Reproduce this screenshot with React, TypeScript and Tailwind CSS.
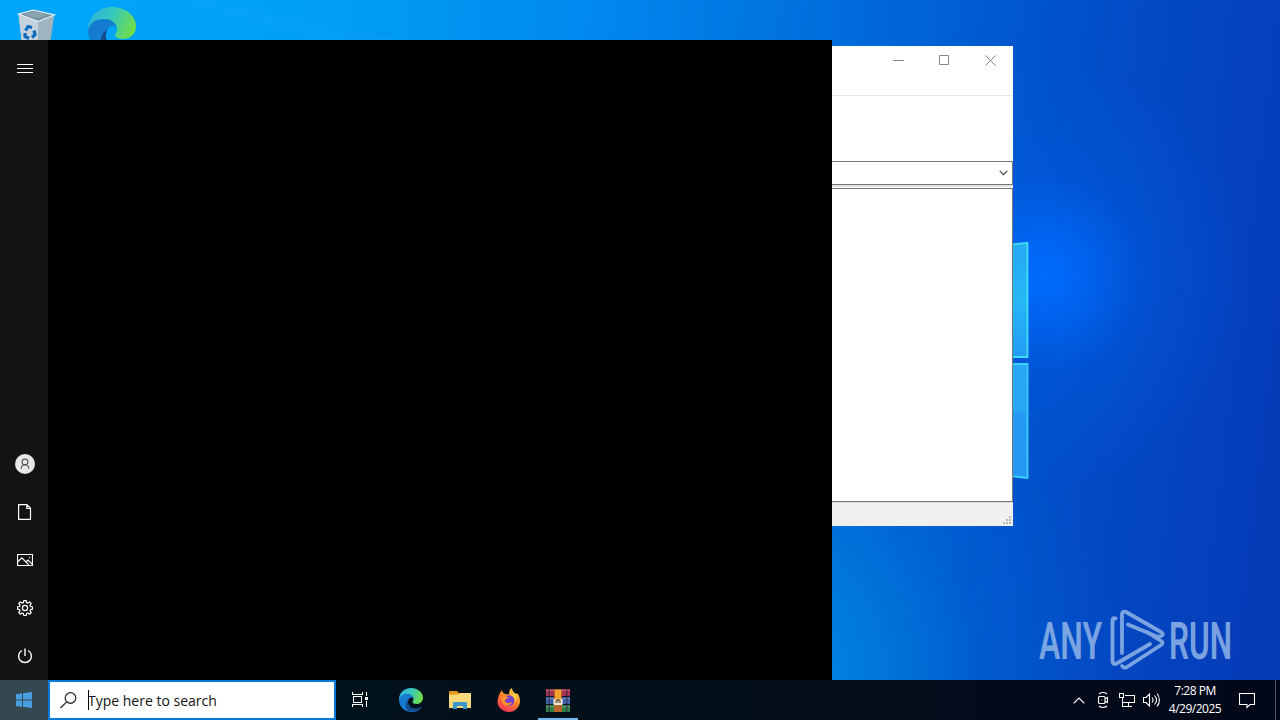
import type { ReactNode } from "react";

const railItems: { name: string; icon: ReactNode }[] = [
  { name: "Account", icon: <AccountIcon /> },
  { name: "Documents", icon: <DocumentIcon /> },
  { name: "Pictures", icon: <PicturesIcon /> },
  { name: "Settings", icon: <SettingsIcon /> },
  { name: "Power", icon: <PowerIcon /> },
];

function HamburgerIcon() {
  return (
    <svg width="16" height="9" viewBox="0 0 16 9" stroke="#fff" shapeRendering="crispEdges">
      <path d="M0 .5h16M0 4.5h16M0 8.5h16" />
    </svg>
  );
}

function AccountIcon() {
  return (
    <svg width="20" height="20" viewBox="0 0 20 20" fill="none">
      <circle cx="10" cy="10" r="10" fill="#e6e6e6" />
      <circle cx="10" cy="8" r="2.9" stroke="#555" strokeWidth="1.1" />
      <path d="M6.3 14.8c0-2.4 1.6-4 3.7-4s3.7 1.6 3.7 4" stroke="#555" strokeWidth="1.1" />
    </svg>
  );
}

function DocumentIcon() {
  return (
    <svg width="14" height="16" viewBox="0 0 14 16" fill="none" stroke="#fff" strokeWidth="1.2">
      <path d="M.6.6h8.200l3.700 3.700v11.100H.6zM8.800.6v3.900h3.700" />
    </svg>
  );
}

function PicturesIcon() {
  return (
    <svg width="16" height="12" viewBox="0 0 16 12" fill="none" stroke="#fff" strokeWidth="1.2">
      <path d="M.5.5h15v11H.5zM.8 7.8 4.8 3.8l7 7M9 8l2-2 4.4 4.4" />
      <circle cx="12.5" cy="3.5" r=".7" fill="#fff" stroke="none" />
    </svg>
  );
}

function SettingsIcon() {
  return (
    <svg width="16" height="16" viewBox="0 0 16 16" fill="none" stroke="#fff" strokeWidth="1.25" strokeLinejoin="round">
      <path d="M6.8.6h2.4l.4 2 1.3.5 1.7-1.2 1.6 1.6L13 5.2l.5 1.3 2 .3v2.4l-2 .4-.5 1.3 1.2 1.7-1.6 1.6-1.7-1.2-1.3.5-.4 2H6.8l-.4-2-1.3-.5-1.7 1.2-1.6-1.6L3 10.900l-.5-1.3-2-.4V6.800l2-.3L3 5.200 1.800 3.500l1.600-1.600 1.700 1.200 1.300-.5z" />
      <circle cx="8" cy="8" r="2.600" />
    </svg>
  );
}

function PowerIcon() {
  return (
    <svg width="16" height="16" viewBox="0 0 16 16" fill="none" stroke="#fff" strokeWidth="1.4">
      <path d="M5 2.500a6.400 6.400 0 1 0 6 0M8 .5v7.500" />
    </svg>
  );
}

function RecycleBin() {
  return (
    <svg width="40" height="48" viewBox="0 0 40 48">
      <path d="M1.500 6 6 44h24L37 8l-16 5z" fill="#b9c8d2" />
      <path d="M1.500 6 21 13v31H6z" fill="#c3d2dc" />
      <path d="M21 13 37 7.500 32 44H21z" fill="#9eb4c1" />
      <path d="m1.500 6 15-4 21 5L21 13.500z" fill="#7895a6" stroke="#eef6fa" strokeWidth="1.100" />
      <path d="m8 6.500 9-3 12 3-8 4z" fill="#8ca3b0" />
      <g fill="none" stroke="#0b6cbd" strokeWidth="3.200">
        <path d="m8.500 22.500 2.500-4 4 1M17 22.500l1 4-3 3M12 30.500l-4-2v-3.500" />
      </g>
    </svg>
  );
}

function EdgeLogo({ size, id }: { size: number; id: string }) {
  return (
    <svg width={size} height={size} viewBox="0 0 48 48">
      <defs>
        <linearGradient id={`${id}-top`} x1="0" y1=".4" x2="1" y2=".7">
          <stop offset="0" stopColor="#2bb4df" />
          <stop offset=".45" stopColor="#38c9b8" />
          <stop offset="1" stopColor="#78df3c" />
        </linearGradient>
        <linearGradient id={`${id}-low`} x1="0" y1="0" x2=".8" y2="1">
          <stop offset="0" stopColor="#1679ce" />
          <stop offset="1" stopColor="#1484d6" />
        </linearGradient>
      </defs>
      <path d="M0 23C0 10 10 0 24 0s24 9 24 19c0 8-6 13-13 13-5 0-8-2-8-4 0-1 2-2 2-6 0-5-5-9-12-9-8 0-14 4-17 10z" fill={`url(#${id}-top)`} />
      <path d="M0 23c2-8 9-11 16-11 8 0 13 5 13 10 0-4-9-5-11 3-2 9 6 18 16 17 5 0 8-2 10-3-4 6-11 9-18 9C11 48 0 38 0 23z" fill={`url(#${id}-low)`} />
      <path d="M17 45c-6-7-6-18 3-23-3 5-3 10 1 14 6 7 15 6 22 2 2-1 3 0 2 1-6 8-17 11-28 6z" fill="#124c91" />
    </svg>
  );
}

function StartMenu() {
  return (
    <div className="absolute left-0 top-10 flex h-[640px] w-[832px] bg-black">
      <nav className="flex w-12 flex-col justify-between bg-[#131313]">
        <button className="flex h-14 w-12 items-center justify-center pl-0.5">
          <HamburgerIcon />
        </button>
        <div className="flex flex-col">
          {railItems.map((item) => (
            <button key={item.name} aria-label={item.name} className="flex h-12 w-12 items-center justify-center pl-0.5">
              {item.icon}
            </button>
          ))}
        </div>
      </nav>
    </div>
  );
}

function AppWindow() {
  return (
    <div className="absolute left-[430px] top-[46px] flex h-[480px] w-[583px] flex-col bg-white">
      <div className="flex h-[29px] justify-end text-[#858585]">
        <div className="flex w-[45px] items-center justify-center">
          <svg width="11" height="11" viewBox="0 0 11 11" stroke="currentColor">
            <path d="M0 5.500h11" />
          </svg>
        </div>
        <div className="flex w-[46px] items-center justify-center">
          <svg width="11" height="11" viewBox="0 0 11 11" fill="none" stroke="currentColor">
            <path d="M.5.5h9v9h-9z" />
          </svg>
        </div>
        <div className="flex w-[46px] items-center justify-center">
          <svg width="11" height="11" viewBox="0 0 11 11" stroke="currentColor">
            <path d="m.5.5 10 10M10.500.5l-10 10" />
          </svg>
        </div>
      </div>
      <div className="h-[21px] border-b border-[#e8e8e8]" />
      <div className="h-[65px]" />
      <div className="flex h-6 items-center justify-end border border-[#777] pr-1">
        <svg width="9" height="6" viewBox="0 0 9 6" fill="none" stroke="#444" strokeWidth="1.200">
          <path d="m.7.8 3.800 3.800L8.300.8" />
        </svg>
      </div>
      <div className="h-[3px] border-b border-white bg-[#e4e4e4]" />
      <div className="h-[314px] border border-[#777]" />
      <div className="flex flex-1 items-end justify-end border-t border-[#d7d7d7] bg-[#f0f0f0] p-0.5">
        <svg width="8" height="8" viewBox="0 0 8 8" fill="#b5b5b5">
          <path d="M6 0h2v2H6zM3 3h2v2H3zM6 3h2v2H6zM0 6h2v2H0zM3 6h2v2H3zM6 6h2v2H6z" />
        </svg>
      </div>
    </div>
  );
}

function WallpaperLogo() {
  return (
    <svg className="absolute left-[1005px] top-[235px]" width="32" height="250" viewBox="0 0 32 250">
      <defs>
        <linearGradient id="pane" x1="0" y1="0" x2="0" y2="1">
          <stop offset="0" stopColor="#27aaf4" />
          <stop offset=".5" stopColor="#25b6f5" />
          <stop offset="1" stopColor="#239cf4" />
        </linearGradient>
      </defs>
      <path d="M0 10 22.500 8v114H0z" fill="url(#pane)" stroke="#40defb" strokeWidth="1.800" />
      <path d="M0 129h22.500v114L0 240.500z" fill="#2498f3" stroke="#3bd0fb" strokeWidth="1.800" />
      <path d="M0 130h21.500v47L0 179z" fill="#27a7f3" />
    </svg>
  );
}

function Watermark() {
  return (
    <svg className="absolute left-[1036px] top-[606px]" width="210" height="70" viewBox="0 0 210 70">
      <g fill="#8fb4e8" opacity=".85" fontFamily="'Roboto', 'Liberation Sans', sans-serif" fontSize="51" fontWeight="600">
        <text x="3" y="53" textLength="63" lengthAdjust="spacingAndGlyphs">ANY</text>
        <text x="133" y="53" textLength="63" lengthAdjust="spacingAndGlyphs">RUN</text>
      </g>
      <g fill="none" stroke="#8fb4e8" strokeWidth="3.800" strokeLinejoin="round" strokeLinecap="round" opacity=".85">
        <path d="M79.500 12.500c-2-1-3 0-3 2V54c0 4 2 5 5 3L114 38" />
        <path d="M86 47V8c0-2 2-3 4-2l35 20c3 2 2 3 0 4l-3 1L92 18.500" />
        <path d="M111 26l14 9c2 1 2 3 0 4L91 61c-2 1-4 1-5-1" />
      </g>
    </svg>
  );
}

function WindowsLogo() {
  return (
    <svg width="16" height="16" viewBox="0 0 16 16" fill="#4a9fe0">
      <path d="M0 2.200 6 1.300v6.300H0zM7 1.200 16 0v7.600H7zM0 8.500h6v6.300l-6-.9zM7 8.500h9V16l-9-1.200z" />
    </svg>
  );
}

function SearchBox() {
  return (
    <div className="flex h-10 w-72 items-center border-2 border-[#0078d7] bg-white pl-2.5">
      <svg width="17" height="17" viewBox="0 0 17 17" fill="none" stroke="#222" strokeWidth="1.200">
        <circle cx="10.500" cy="6" r="5.300" />
        <path d="M6.700 9.800.5 16" />
      </svg>
      <div className="ml-[11px] h-5 w-px bg-black" />
      <span className="-ml-px whitespace-nowrap pt-0.5 font-['Open_Sans',sans-serif] text-[14px] leading-5 text-[#111]">
        Type here to search
      </span>
    </div>
  );
}

function TaskViewIcon() {
  return (
    <svg width="17" height="17" viewBox="0 0 17 17" fill="none" stroke="#fff" shapeRendering="crispEdges">
      <path d="M.5 1v2.500h10V1M.5 16v-2.500h10V16M1.500 5.500h8v6h-8zM14.500 1v4M14.500 10v6" />
      <path d="M13 6h3v3h-3z" fill="#fff" stroke="none" />
    </svg>
  );
}

function FolderIcon() {
  return (
    <svg width="22" height="18" viewBox="0 0 22 18">
      <path d="M0 1c0-.6.400-1 1-1h7l2 2h11v3H0z" fill="#e29a1d" />
      <path d="M0 3.500h9L11 2h11v15H0z" fill="#fbd978" />
      <path d="M4 18v-6c0-.6.400-1 1-1h12c.6 0 1 .4 1 1v6h-4v-3H8v3z" fill="#3f97cf" />
    </svg>
  );
}

function FirefoxIcon() {
  return (
    <svg width="24" height="24" viewBox="0 0 24 24">
      <defs>
        <linearGradient id="fox" x1=".8" y1="0" x2=".3" y2="1">
          <stop offset="0" stopColor="#ffe24a" />
          <stop offset=".45" stopColor="#ff8a28" />
          <stop offset="1" stopColor="#f5305a" />
        </linearGradient>
      </defs>
      <path d="M3 5c1-1 1-2 2-3 0 2 1 3 3 4l4 .5C12 3 13 1 15 0c0 3 2 4 4 6l1-1c2 2 3 5 3 8 0 6-5 11-11 11S.500 19.500.500 13.500C.500 10 2 7 3 5z" fill="url(#fox)" />
      <circle cx="12" cy="12.500" r="5.300" fill="#7441cf" />
      <path d="M5 9c2-1 5-1 7 1-2 0-3 1-4 2 0 2 1 3 3 3s3-1 4-1c-1 4-7 5-9 1-1-2-2-4-1-6z" fill="#ff942c" />
      <path d="M14 7c3 1 5 4 4 8 2-3 2-6 0-9z" fill="#ffd447" />
    </svg>
  );
}

function WinRarIcon() {
  return (
    <svg width="24" height="23" viewBox="0 0 24 23">
      <path d="M0 0h24v7H0z" fill="#a8324f" />
      <path d="M0 8h24v7H0z" fill="#3f62ab" />
      <path d="M0 16h24v7H0z" fill="#2f8048" />
      <path d="M0 1.500h24M0 9.500h24M0 17.500h24" stroke="#ddd" opacity=".3" />
      <path d="M2.500 0h1.500v23H2.500zM20 0h1.500v23h-1.500z" fill="#332d45" opacity=".7" />
      <path d="M8 0h8v23H8z" fill="#b9652a" />
      <path d="M9 1h6v9H9z" fill="#f2a22e" />
      <path d="M7.500 10h9v6h-9z" fill="#f5ecd8" />
      <path d="M10 14v-3h4v3M12 10v4" fill="none" stroke="#5a3818" />
    </svg>
  );
}

function SystemTray() {
  return (
    <div className="flex h-10 items-center text-white">
      <div className="flex w-6 justify-center">
        <svg width="12" height="7" viewBox="0 0 12 7" fill="none" stroke="currentColor" strokeWidth="1.200">
          <path d="m.7 6.300 5.300-5.300 5.300 5.300" />
        </svg>
      </div>
      <div className="flex w-6 justify-center">
        <svg width="12" height="16" viewBox="0 0 12 16" fill="none" stroke="currentColor" strokeWidth="1.100">
          <path d="M2 2C4 0 8 0 10 2M2 14c2 2 6 2 8 0M2.500 4.500h4.500c.6 0 1 .4 1 1v5c0 .6-.4 1-1 1h-4.500c-.6 0-1-.4-1-1v-5c0-.6.4-1 1-1zM8 7l2.500-1.500v5L8 9" />
          <circle cx="4.750" cy="8" r=".5" fill="currentColor" stroke="none" />
        </svg>
      </div>
      <div className="flex w-6 justify-center">
        <svg width="16" height="14" viewBox="0 0 16 14" fill="none" stroke="currentColor" shapeRendering="crispEdges">
          <path d="M6 2.500h9.500v7H3.500V5M.5.500h4v4h-4zM9.500 10v3M6 13.500h7M3.500 9v4.500H6" />
        </svg>
      </div>
      <div className="flex w-6 justify-center">
        <svg width="17" height="14" viewBox="0 0 17 14" fill="none" stroke="currentColor" strokeWidth="1.100">
          <path d="M.5 4.500h2.500l3.500-3.500v12L3 9.500H.500zM9 4.500c1.300 1.500 1.300 3.500 0 5M11.500 2.500c2.500 2.700 2.500 6.300 0 9M14 .5c3.200 3.800 3.200 9.200 0 13" />
        </svg>
      </div>
      <div className="flex w-16 flex-col items-center whitespace-nowrap font-['Open_Sans',sans-serif] text-[12px] leading-[18px] tracking-[-0.5px]">
        <span>7:28 PM</span>
        <span>4/29/2025</span>
      </div>
      <div className="flex w-10 justify-center">
        <svg width="16" height="17" viewBox="0 0 16 17" fill="none" stroke="currentColor" strokeWidth="1.100">
          <path d="M.5 1.500h15v11h-4.500l-3 3v-3H.500z" />
        </svg>
      </div>
      <div className="ml-2 h-10 w-[5px] border-l border-[#49505f]" />
    </div>
  );
}

function Taskbar() {
  return (
    <footer className="flex h-10 items-center justify-between bg-linear-to-r from-[#02151e] via-[#020f19] to-[#030819]">
      <div className="flex h-10 items-center">
        <button aria-label="Start" className="flex h-10 w-12 items-center justify-center bg-[#344851]">
          <WindowsLogo />
        </button>
        <SearchBox />
        <div className="flex w-[50px] justify-center pb-0.5 pr-0.5">
          <TaskViewIcon />
        </div>
        <div className="flex w-[49px] justify-center">
          <EdgeLogo size={24} id="edge-task" />
        </div>
        <div className="flex w-[49px] justify-center">
          <FolderIcon />
        </div>
        <div className="flex w-[49px] justify-center">
          <FirefoxIcon />
        </div>
        <div className="ml-[5px] flex h-10 w-10 items-center justify-center border-b-2 border-[#76b9ed] pt-0.5">
          <WinRarIcon />
        </div>
      </div>
      <SystemTray />
    </footer>
  );
}

export default function App() {
  return (
    <div className="flex h-[720px] w-[1280px] flex-col overflow-hidden">
      <main className="relative h-[680px] overflow-hidden bg-[radial-gradient(circle_at_1045px_275px,#006cff_0px,#0069fbcc_35px,#005ce566_100px,#0050d500_210px),linear-gradient(97deg,#00a6fc_0%,#009ff4_24%,#0089ee_43%,#0074df_57%,#0064d6_67%,#0052ca_78%,#0446c1_88%,#053ab6_100%)]">
        <div className="absolute left-0 top-0 size-full bg-[radial-gradient(circle_at_760px_680px,#0090ea_0px,#0086e0bb_90px,#0074da44_220px,#0068d200_360px)]" />
        <svg className="absolute left-0 top-0" width="400" height="40" viewBox="0 0 400 40">
          <path d="M180 0 320 40H400L200 0z" fill="#28adff" opacity=".12" />
        </svg>
        <div className="absolute left-[17px] top-2">
          <RecycleBin />
        </div>
        <div className="absolute left-[88px] top-[7px]">
          <EdgeLogo size={48} id="edge-desk" />
        </div>
        <WallpaperLogo />
        <AppWindow />
        <Watermark />
        <StartMenu />
      </main>
      <Taskbar />
    </div>
  );
}
